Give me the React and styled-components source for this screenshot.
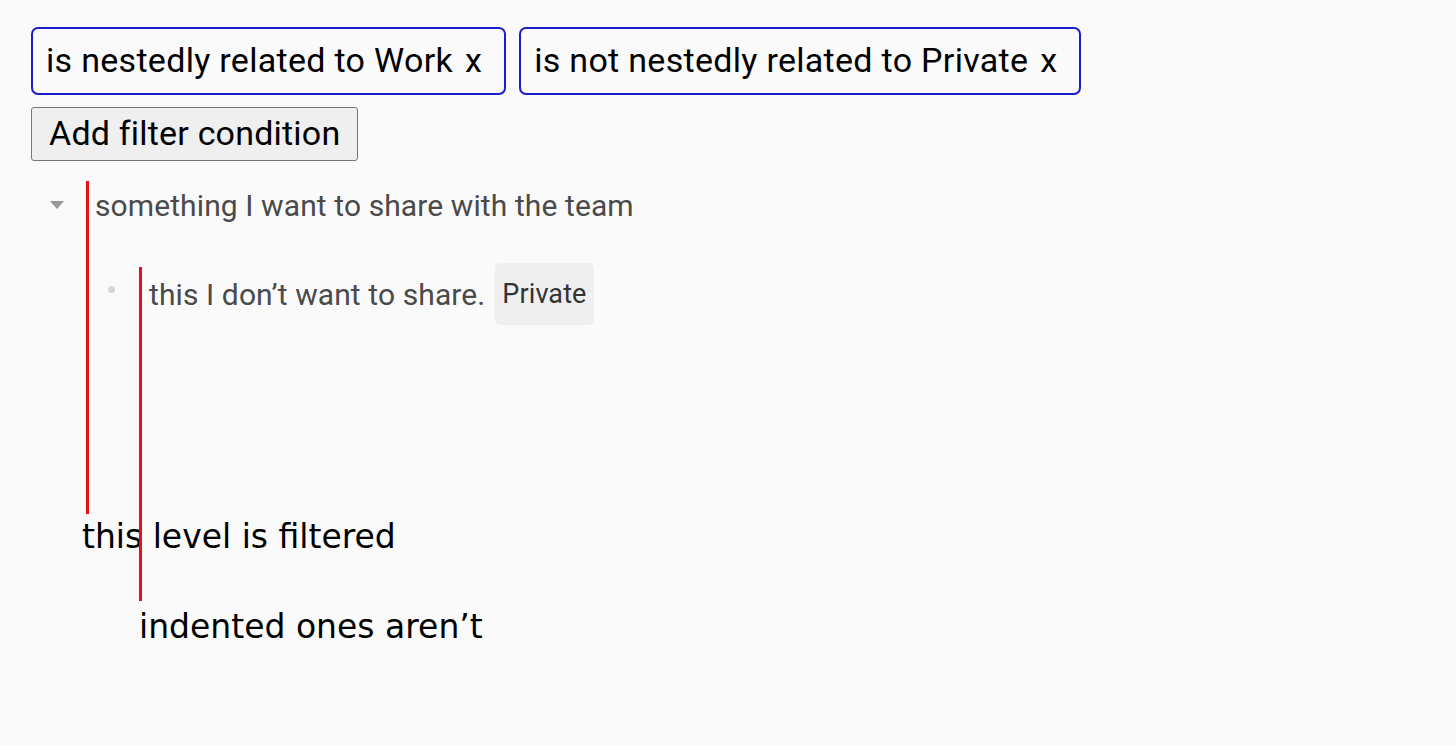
import styled, { createGlobalStyle } from 'styled-components';

const GlobalStyle = createGlobalStyle`
  html, body {
    margin: 0;
    padding: 0;
    background: #fafafa;
  }
  body {
    font-family: Roboto, "Noto Sans", sans-serif;
  }
`;

const Page = styled.div`
  position: relative;
  width: 1456px;
  height: 746px;
  padding: 27px 31px;
  box-sizing: border-box;
  overflow: hidden;
`;

const FilterRow = styled.div`
  display: flex;
  gap: 13px;
`;

const Chip = styled.div`
  display: flex;
  align-items: center;
  height: 68px;
  box-sizing: border-box;
  padding: 0 22px 3px 13px;
  border: 2px solid #1c1cd0;
  border-radius: 7px;
  font-size: 34px;
  letter-spacing: 0.3px;
  color: #000;
`;

const Remove = styled.span`
  margin-left: 12px;
`;

const AddButton = styled.button`
  margin-top: 12px;
  height: 54px;
  padding: 0 17px 2px;
  font-family: inherit;
  font-size: 34px;
  letter-spacing: 0.2px;
  color: #000;
  background: #efefef;
  border: 1.5px solid #767676;
  border-radius: 3px;
`;

const Tree = styled.div`
  margin-top: 22px;
  display: flex;
  flex-direction: column;
`;

const Row = styled.div`
  display: flex;
  align-items: center;
  height: 44px;
  margin-top: ${p => p.$gap || 0}px;
  color: #4a4a4a;
  font-size: 30px;
  letter-spacing: 0.1px;
`;

const Toggle = styled.div`
  width: 0;
  height: 0;
  margin: 0 31px 0 19px;
  border-left: 7px solid transparent;
  border-right: 7px solid transparent;
  border-top: 8px solid #999;
`;

const Bullet = styled.div`
  width: 7px;
  height: 7px;
  margin: 0 34px 10px 77px;
  border-radius: 50%;
  background: #d6d6d6;
`;

const Tag = styled.span`
  display: inline-flex;
  align-items: center;
  height: 62px;
  margin-left: 10px;
  padding: 0 7px;
  background: #efefef;
  border-radius: 5px;
  font-size: 27px;
  color: #333;
`;

const Annotation = styled.div`
  position: absolute;
  left: ${p => p.$x}px;
  top: ${p => p.$y}px;
  display: flex;
  flex-direction: column;
`;

const Marker = styled.div`
  width: 3px;
  height: ${p => p.$length}px;
  margin-left: ${p => p.$offset}px;
  background: #e6101a;
`;

const Note = styled.div`
  margin-top: ${p => p.$gap}px;
  font-family: "DejaVu Sans", sans-serif;
  font-size: 33px;
  line-height: 38px;
  color: #000;
  white-space: nowrap;
`;

export default function App() {
  return (
    <Page>
      <GlobalStyle />
      <FilterRow>
        <Chip>is nestedly related to Work<Remove>x</Remove></Chip>
        <Chip>is not nestedly related to Private<Remove>x</Remove></Chip>
      </FilterRow>
      <AddButton>Add filter condition</AddButton>
      <Tree>
        <Row>
          <Toggle />
          something I want to share with the team
        </Row>
        <Row $gap={45}>
          <Bullet />
          this I don’t want to share.
          <Tag>Private</Tag>
        </Row>
      </Tree>
      <Annotation $x={82} $y={181}>
        <Marker $length={333} $offset={4} />
        <Note $gap={4}>this level is filtered</Note>
      </Annotation>
      <Annotation $x={139} $y={267}>
        <Marker $length={334} $offset={0} />
        <Note $gap={7}>indented ones aren’t</Note>
      </Annotation>
    </Page>
  );
}
